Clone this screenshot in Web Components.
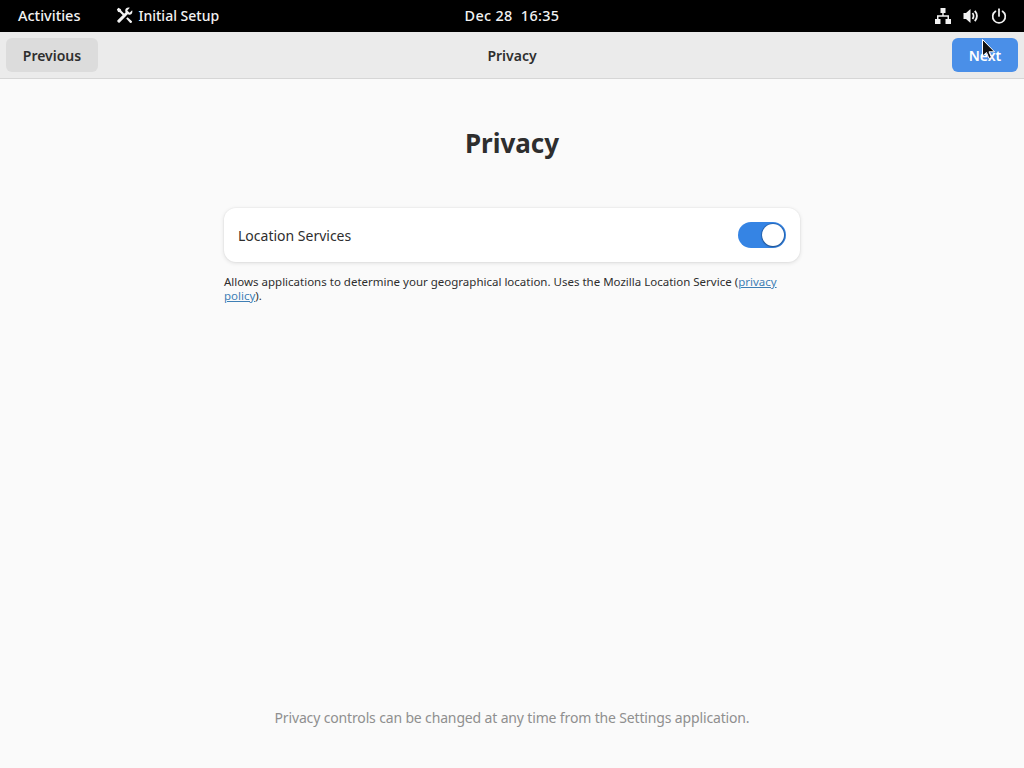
<!DOCTYPE html>
<html>
<head>
<meta charset="utf-8">
<title>Initial Setup</title>
<style>
    html, body { margin: 0; height: 100%; }
    body { width: 1024px; height: 768px; overflow: hidden; font-family: "Noto Sans", sans-serif; }
</style>
</head>
<body>
<x-setup-window>
    <x-top-bar slot="top"></x-top-bar>
    <x-header-bar slot="header" title="Privacy"></x-header-bar>
    <x-privacy-page></x-privacy-page>
</x-setup-window>
<x-cursor></x-cursor>

<script>
class SetupWindow extends HTMLElement {
    constructor() {
        super();
        this.attachShadow({ mode: "open" });
        this.shadowRoot.innerHTML = `
<style>
    :host { display: flex; flex-direction: column; width: 1024px; height: 768px; background: #fafafa; }
    .main { flex: 1; display: flex; min-height: 0; }
</style>
<slot name="top"></slot>
<slot name="header"></slot>
<div class="main"><slot></slot></div>`;
    }
}
customElements.define("x-setup-window", SetupWindow);

class TopBar extends HTMLElement {
    constructor() {
        super();
        this.attachShadow({ mode: "open" });
        this.shadowRoot.innerHTML = `
<style>
    :host { display: grid; grid-template-columns: 1fr auto 1fr; align-items: center; height: 32px; padding-bottom: 2px; box-sizing: border-box; background: #000; color: #f2f2f2; font-size: 14.5px; font-weight: 500; flex: none; }
    .left { display: flex; align-items: center; padding-left: 18px; gap: 36px; }
    .app { display: flex; align-items: center; gap: 5px; font-size: 14px; }
    .right { display: flex; justify-content: flex-end; align-items: center; gap: 12px; padding-right: 17px; padding-top: 2px; }
    svg { display: block; }
    .clock { white-space: pre; font-size: 14.4px; letter-spacing: .35px; }
</style>
<div class="left">
    <span>Activities</span>
    <span class="app">
        <svg width="17" height="17" viewBox="0 0 16 16" fill="#f2f2f2"><path d="M.8 2.300 2.300.8 4.600 2 5 3.600 9.400 8 8 9.400 3.600 5 2 4.600Z"/><path d="M15.200 3 12.800 5.400 10.600 3.200 13 .8C11 .1 8.900 1 8.700 3 8.600 3.800 8.800 4.500 9.100 5L1.400 12.500C.4 13.500 2.500 15.600 3.500 14.600L11 6.900C11.600 7.200 12.300 7.400 13.100 7.300 15 7 15.900 5 15.200 3Z"/><path d="M9.600 10.900 10.900 9.600 14.800 13.200C15.800 14.200 14.200 15.800 13.200 14.800Z"/></svg>
        <span>Initial Setup</span>
    </span>
</div>
<div class="clock">Dec 28  16:35</div>
<div class="right">
    <svg width="16" height="16" viewBox="0 0 16 16" fill="#f2f2f2"><path d="M5.500 0h5v5H8.700v2.200H14V11h2v5h-5.500v-5h2V8.700H3.500V11h2v5H0v-5h2V7.200h5.300V5H5.500Z"/></svg>
    <svg width="16" height="16" viewBox="0 0 16 16" fill="#f2f2f2"><path d="M.5 5h2.500L7.500 1v14L3 11H.5Z"/><path d="M9.500 5C10.800 6.600 10.800 9.400 9.500 11M11.800 2.800C14.600 5.800 14.600 10.200 11.800 13.200" fill="none" stroke="#f2f2f2" stroke-width="1.900"/></svg>
    <svg width="16" height="16" viewBox="0 0 16 16" fill="none" stroke="#f2f2f2" stroke-width="1.700" stroke-linecap="round"><path d="M8 1.200V8"/><path d="M4.500 3.300A6.300 6.300 0 1 0 11.500 3.300"/></svg>
</div>`;
    }
}
customElements.define("x-top-bar", TopBar);

class HeaderBar extends HTMLElement {
    constructor() {
        super();
        this.attachShadow({ mode: "open" });
        this.shadowRoot.innerHTML = `
<style>
    :host { display: grid; grid-template-columns: 1fr auto 1fr; align-items: center; height: 46px; padding: 0 6px; background: #ebebeb; border-bottom: 1px solid #d6d6d6; flex: none; }
    .title { font-size: 14px; font-weight: 600; color: #2e2e2e; }
    .end { justify-self: end; }
    .start { justify-self: start; }
</style>
<x-button class="start">Previous</x-button>
<div class="title"></div>
<x-button class="end" suggested>Next</x-button>`;
        this.shadowRoot.querySelector(".title").textContent = this.getAttribute("title");
    }
}

class XButton extends HTMLElement {
    constructor() {
        super();
        this.attachShadow({ mode: "open" });
        this.shadowRoot.innerHTML = `
<style>
    :host { display: flex; align-items: center; justify-content: center; height: 34px; width: 92px; border-radius: 6px; background: #dcdcdc; color: #2e2e2e; font-size: 14px; font-weight: 600; }
    :host([suggested]) { width: 66px; background: #4a8fe8; color: #fff; }
</style>
<slot></slot>`;
    }
}
customElements.define("x-button", XButton);
customElements.define("x-header-bar", HeaderBar);

class ToggleSwitch extends HTMLElement {
    constructor() {
        super();
        this.attachShadow({ mode: "open" });
        this.shadowRoot.innerHTML = `
<style>
    :host { display: flex; justify-content: flex-end; align-items: center; box-sizing: border-box; width: 48px; height: 26px; padding: 2px; border-radius: 13px; background: #3584e4; flex: none; }
    .knob { width: 22px; height: 22px; border-radius: 50%; background: #fff; box-shadow: 0 0 0 1px rgba(20,60,110,.35), 0 1px 2px rgba(0,0,0,.3); }
</style>
<div class="knob"></div>`;
    }
}
customElements.define("x-toggle-switch", ToggleSwitch);

class PrivacyPage extends HTMLElement {
    constructor() {
        super();
        this.attachShadow({ mode: "open" });
        this.shadowRoot.innerHTML = `
<style>
    :host { flex: 1; display: flex; flex-direction: column; align-items: center; color: #2e2e2e; }
    h1 { margin: 46px 0 0; font-size: 26px; line-height: 36px; font-weight: 700; }
    .card { box-sizing: border-box; width: 576px; height: 54px; margin-top: 47px; padding: 0 14px; display: flex; align-items: center; justify-content: space-between; background: #fff; border-radius: 12px; box-shadow: 0 0 0 1px rgba(0,0,0,.02), 0 1px 4px rgba(0,0,0,.12); font-size: 14px; }
    .note { width: 576px; margin: 13px 0 0; font-size: 11.500px; line-height: 14px; }
    .note span { display: block; }
    a { color: #3f7fb5; }
    .foot { margin-top: auto; margin-bottom: 40px; font-size: 14px; letter-spacing: -.15px; line-height: 20px; color: #8f8f8f; }
</style>
<h1>Privacy</h1>
<div class="card"><span>Location Services</span><x-toggle-switch></x-toggle-switch></div>
<div class="note"><span>Allows applications to determine your geographical location. Uses the Mozilla Location Service (<a href="#">privacy</a></span><span><a href="#">policy</a>).</span></div>
<div class="foot">Privacy controls can be changed at any time from the Settings application.</div>`;
    }
}
customElements.define("x-privacy-page", PrivacyPage);

class XCursor extends HTMLElement {
    constructor() {
        super();
        this.attachShadow({ mode: "open" });
        this.shadowRoot.innerHTML = `
<style>
    :host { position: absolute; left: 982px; top: 39px; width: 14px; height: 21px; }
</style>
<svg width="14" height="21" viewBox="0 0 14 21"><path d="M.5.500V17L4.500 13.500 7 19.500 9.500 18.500 7 12.800H12.500Z" fill="#111" stroke="#fff" stroke-width="1"/></svg>`;
    }
}
customElements.define("x-cursor", XCursor);
</script>
</body>
</html>
